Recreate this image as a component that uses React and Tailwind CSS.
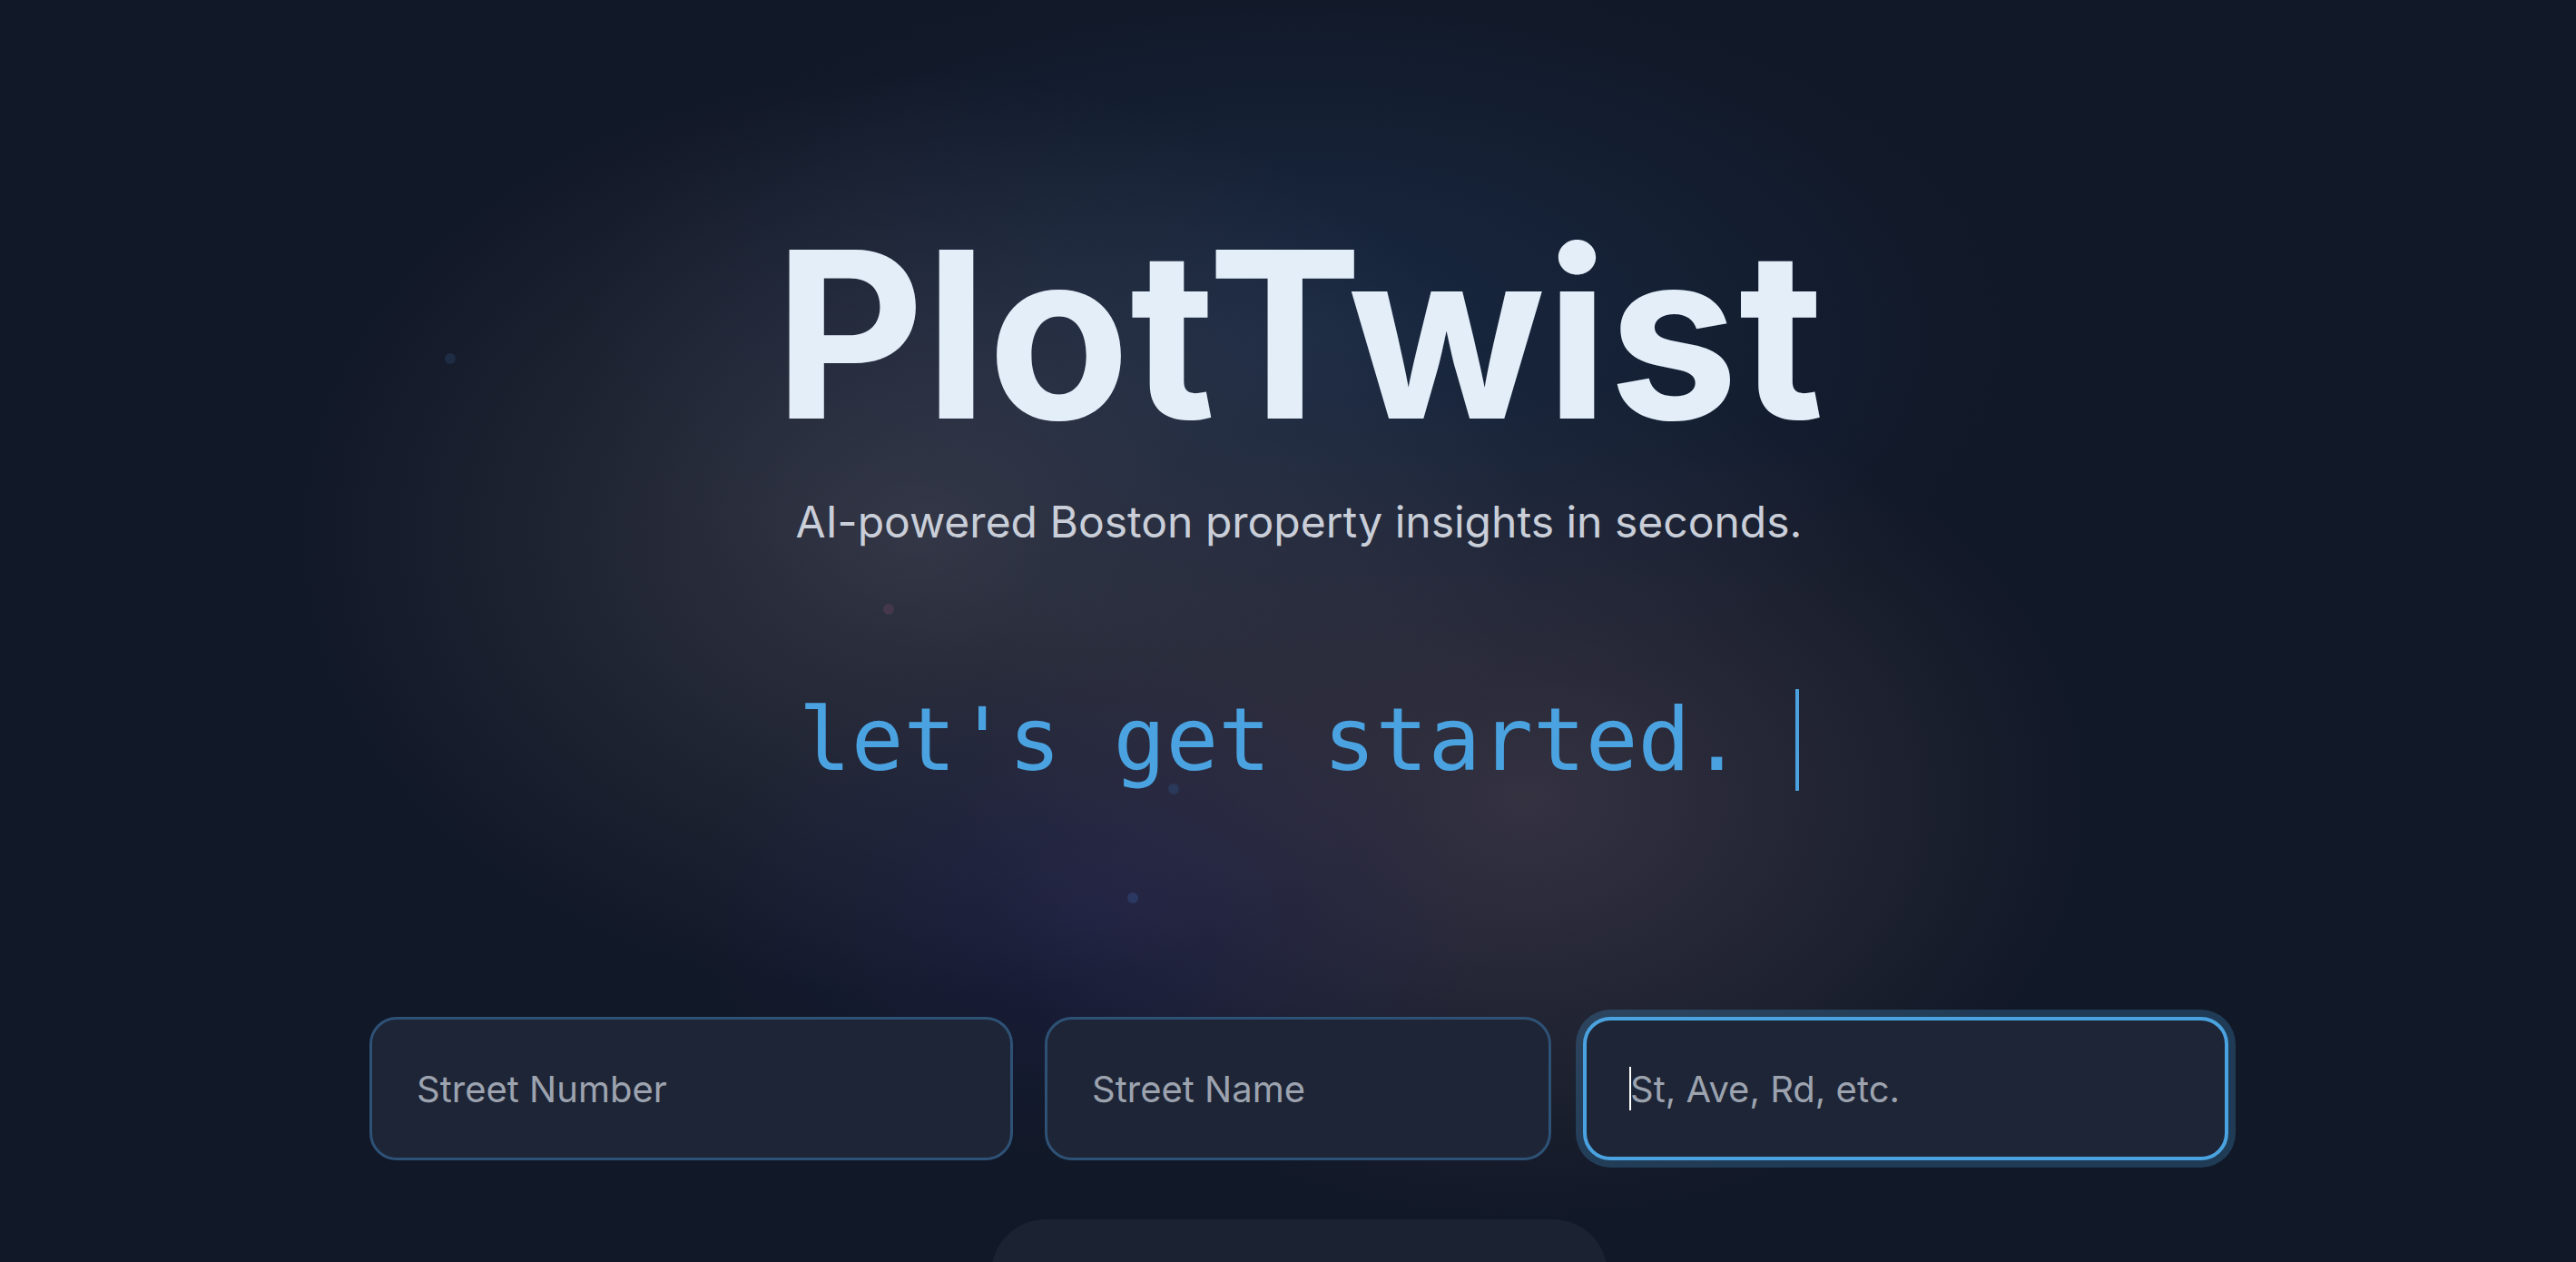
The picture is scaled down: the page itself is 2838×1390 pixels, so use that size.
import React from 'react';

// floating background particles
const dots = [
  { x: 'left-[490px] top-[389px]', c: 'bg-[#1e2c44]' },
  { x: 'left-[973px] top-[665px]', c: 'bg-[#44384a]' },
  { x: 'left-[1287px] top-[863px]', c: 'bg-[#2a3859]' },
  { x: 'left-[1242px] top-[983px]', c: 'bg-[#2b3862]' },
  { x: 'left-[1650px] top-[1142px]', c: 'bg-[#283b58]' },
  { x: 'left-[1824px] top-[1252px]', c: 'bg-[#2c3044]' },
];

export default function App() {
  return (
    <div className="relative h-screen overflow-hidden bg-[#111827] font-['Inter',sans-serif]">
      {/* Glows */}
      <div className="pointer-events-none absolute inset-0">
        <div className="absolute left-[640px] top-[-40px] h-[820px] w-[1580px] rounded-full bg-[radial-gradient(closest-side,rgba(34,62,100,0.45),rgba(34,62,100,0))]" />
        <div className="absolute left-[330px] top-[80px] h-[1020px] w-[1360px] rounded-full bg-[radial-gradient(closest-side,rgba(78,76,90,0.55),rgba(78,76,90,0))]" />
        <div className="absolute left-[1060px] top-[420px] h-[920px] w-[1240px] rounded-full bg-[radial-gradient(closest-side,rgba(88,76,92,0.5),rgba(88,76,92,0))]" />
        <div className="absolute left-[760px] top-[720px] h-[560px] w-[900px] rounded-full bg-[radial-gradient(closest-side,rgba(48,44,110,0.32),rgba(48,44,110,0))]" />
        {dots.map((d, i) => (
          <span key={i} className={`absolute h-3 w-3 rounded-full ${d.x} ${d.c}`} />
        ))}
      </div>

      <main className="relative flex flex-col items-center pl-6 pt-[240px]">
        <h1 className="text-[256px] font-bold leading-none text-[#e3eef9]">PlotTwist</h1>
        <p className="mt-[55px] text-5xl leading-none text-[#c9ced8]">
          AI-powered Boston property insights in seconds.
        </p>

        {/* Typing line */}
        <div className="mt-[160px] flex h-[112px] items-center">
          <span className="font-['DejaVu_Sans_Mono',monospace] text-8xl leading-none text-[#4aa3e0]">
            let's get started.
          </span>
          <span className="ml-[58px] h-[112px] w-1 bg-[#4aa3e0]" />
        </div>

        {/* Address inputs */}
        <div className="mt-[249px] flex gap-[35px]">
          <input
            type="text"
            placeholder="Street Number"
            className="h-[158px] w-[709px] rounded-[30px] border-[3px] border-[#2e5176] bg-[#1e2536] pl-[49px] text-[40px] text-gray-200 outline-none placeholder:text-[#9ca3af]"
          />
          <input
            type="text"
            placeholder="Street Name"
            className="h-[158px] w-[558px] rounded-[30px] border-[3px] border-[#2e5176] bg-[#1e2536] pl-[49px] text-[40px] text-gray-200 outline-none placeholder:text-[#9ca3af]"
          />
          <div className="relative">
            <input
              type="text"
              placeholder="St, Ave, Rd, etc."
              className="h-[158px] w-[711px] rounded-[30px] border-4 border-[#4aa3e0] bg-[#1e2536] pl-12 text-[40px] text-gray-200 caret-transparent outline-none ring-8 ring-[#4aa3e0]/25 placeholder:text-[#9ca3af]"
            />
            <span className="absolute left-[51px] top-[55px] h-[48px] w-[2px] bg-white" />
          </div>
        </div>

        <button className="mt-[65px] h-[140px] w-[679px] rounded-[60px] bg-[#1b2232]" />
      </main>
    </div>
  );
}
